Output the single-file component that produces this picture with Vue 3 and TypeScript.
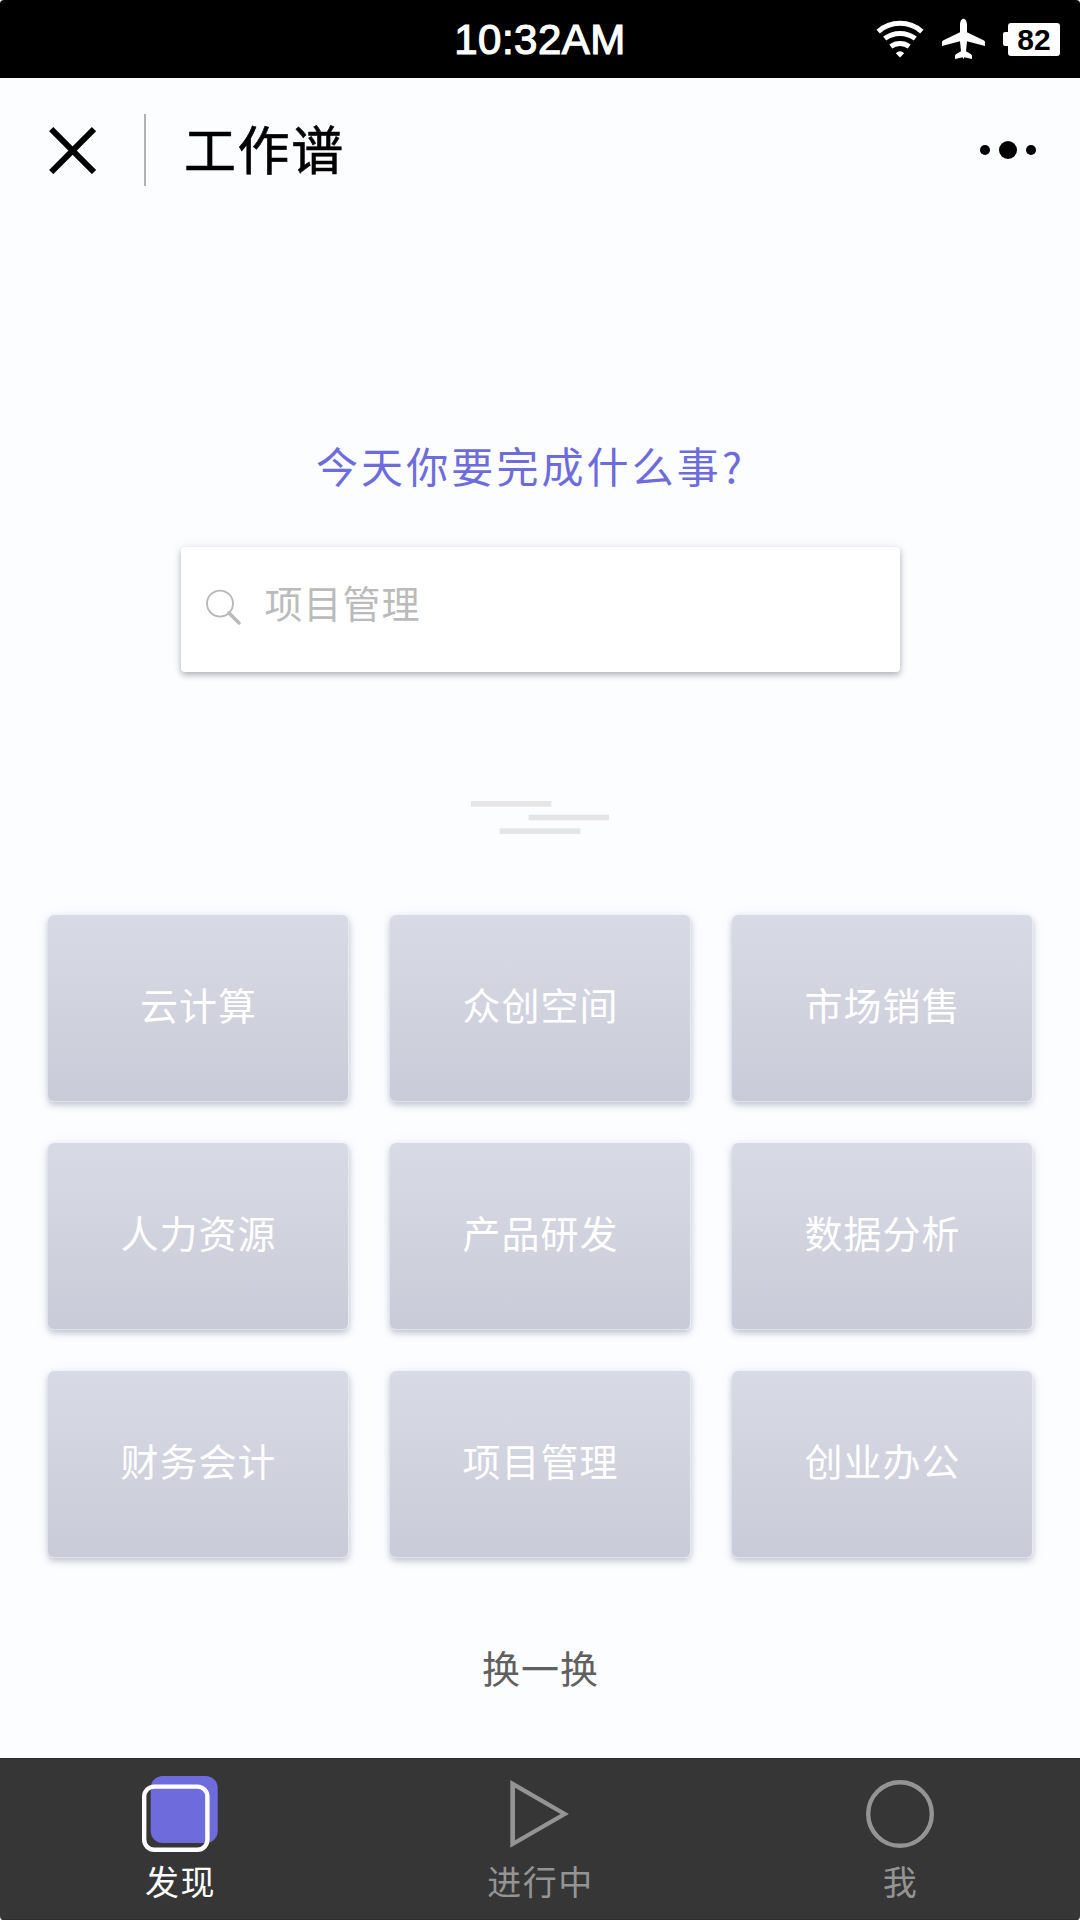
<script setup lang="ts">
import { ref } from 'vue'

interface Tab {
  id: string
  label: string
}

const categories: string[] = [
  '云计算', '众创空间', '市场销售',
  '人力资源', '产品研发', '数据分析',
  '财务会计', '项目管理', '创业办公',
]

const tabs: Tab[] = [
  { id: 'discover', label: '发现' },
  { id: 'progress', label: '进行中' },
  { id: 'me', label: '我' },
]

const active = ref('discover')
</script>

<template>
  <div class="screen">
    <div class="status">
      <span class="side"></span>
      <span class="time">10:32AM</span>
      <div class="side indicators">
        <svg class="wifi" width="48" height="38" viewBox="876 19 48 38" fill="none" stroke="#fff" stroke-width="5">
          <path d="M878.2 30.6A33 33 0 0 1 921.8 30.6" />
          <path d="M884.7 37.6A25.5 25.5 0 0 1 915.3 37.6" />
          <path d="M890.8 45.6A15.6 15.6 0 0 1 909.2 45.6" />
          <path d="M895.8 52.3Q900 48.2 904.2 52.3L900 56.6Z" fill="#fff" stroke="none" />
        </svg>
        <svg class="plane" width="44" height="42" viewBox="942 18 44 42" fill="#fff">
          <path d="M963.5 18.8C965.5 18.8 967 21.5 967 25V32.2L984 40.5Q985 41 985 42.2V46L967 41.3L966 51.2L970.8 54Q972 54.8 972 56V59L964.3 57.2L963.5 59.3L962.7 57.2L955 59V56Q955 54.8 956.2 54L961 51.2L960 41.3L942 46V42.2Q942 41 943 40.5L960 32.2V25C960 21.5 961.5 18.8 963.5 18.8Z" />
        </svg>
        <div class="battery"><i></i><b>82</b></div>
      </div>
    </div>

    <header class="header">
      <svg class="close" width="48" height="48" viewBox="0 0 48 48" stroke="#000" stroke-width="6">
        <path d="M2.2 3.2L45 46M45 3.2L2.2 46" />
      </svg>
      <span class="divider"></span>
      <h1>工作谱</h1>
      <div class="more"><i></i><i class="big"></i><i></i></div>
    </header>

    <main class="content">
      <h2>今天你要完成什么事?</h2>
      <div class="search">
        <svg width="38" height="38" viewBox="0 0 38 38" fill="none" stroke="#b9b9b9">
          <circle cx="15" cy="14.6" r="13" stroke-width="1.9" />
          <path d="M24 24L34 34" stroke-width="3.4" stroke-linecap="round" />
        </svg>
        <span>项目管理</span>
      </div>
      <svg class="lines" width="140" height="36" viewBox="0 0 140 36" fill="#e5e5e5">
        <rect x="1" y="1" width="80.4" height="5.6" />
        <rect x="58.6" y="14.6" width="80.4" height="5.7" />
        <rect x="29.7" y="28.4" width="80.6" height="5.6" />
      </svg>
      <div class="grid">
        <div v-for="name in categories" :key="name" class="card"><span>{{ name }}</span></div>
      </div>
      <div class="refresh">换一换</div>
    </main>

    <nav class="tabs">
      <div v-for="tab in tabs" :key="tab.id" class="tab" :class="{ active: active === tab.id }" @click="active = tab.id">
        <svg width="80" height="80" viewBox="0 0 80 80" fill="none">
          <template v-if="tab.id === 'discover'">
            <rect x="10.7" y="3" width="67" height="67" rx="12" fill="#6e6cdc" />
            <rect x="4.2" y="13.6" width="63.2" height="63.2" rx="10" stroke="#fff" stroke-width="4.4" />
          </template>
          <path v-else-if="tab.id === 'progress'" d="M10.3 7V74.8L68.9 41ZM15 14.8V67.2L60.5 41Z" fill="#949494" fill-rule="evenodd" />
          <circle v-else cx="40" cy="41" r="31.8" stroke="#949494" stroke-width="4.4" />
        </svg>
        <span>{{ tab.label }}</span>
      </div>
    </nav>
  </div>
</template>

<style>
body {
  background: #fff;
}
</style>

<style scoped>
.screen {
  width: 1080px;
  height: 1920px;
  display: flex;
  flex-direction: column;
  overflow: hidden;
  border-radius: 4px;
  background: #fcfdff;
  font-family: "Noto Sans CJK SC", sans-serif;
}
.status {
  height: 78px;
  background: #000;
  color: #fff;
  display: flex;
  align-items: center;
}
.side {
  flex: 1;
  display: flex;
}
.time {
  font: 42px/78px "Liberation Sans", sans-serif;
  -webkit-text-stroke: 1.2px #fff;
  letter-spacing: .5px;
  padding-top: 2px;
}
.indicators {
  justify-content: flex-end;
  align-items: center;
}
.plane {
  margin-left: 18px;
}
.battery {
  margin: 0 20px 0 17px;
  display: flex;
  align-items: center;
}
.battery i {
  width: 5px;
  height: 14px;
  border-radius: 2px 0 0 2px;
  background: #fff;
}
.battery b {
  width: 52px;
  height: 33px;
  border-radius: 3px;
  background: #fff;
  color: #000;
  font: bold 30px/33px "Liberation Sans", sans-serif;
  text-align: center;
}
.header {
  height: 144px;
  display: flex;
  align-items: center;
  padding: 0 44px 0 49px;
}
.divider {
  width: 2px;
  height: 72px;
  margin: 0 38px 0 47px;
  background: #b3b3b5;
}
h1, h2 {
  margin: 0;
  font-weight: 400;
}
h1 {
  font-size: 52px;
  line-height: 72px;
  letter-spacing: 1.6px;
  -webkit-text-stroke: .6px #000;
  flex: 1;
  margin-bottom: 4px;
}
.more {
  display: flex;
  align-items: center;
  gap: 9px;
}
.more i {
  width: 10px;
  height: 10px;
  border-radius: 50%;
  background: #000;
}
.more .big {
  width: 18px;
  height: 18px;
}
.content {
  flex: 1;
  display: flex;
  flex-direction: column;
  align-items: center;
}
h2 {
  margin-top: 213px;
  width: 448px;
  height: 60px;
  line-height: 60px;
  font-size: 42px;
  letter-spacing: 3.1px;
  white-space: nowrap;
  color: #6e6cdc;
}
.search {
  width: 719px;
  height: 125px;
  margin-top: 52px;
  box-sizing: border-box;
  padding-left: 24px;
  display: flex;
  align-items: center;
  border-radius: 4px;
  background: #fff;
  box-shadow: 0 3px 6px rgba(0, 0, 0, .28), 0 0 12px rgba(60, 80, 120, .07);
  color: #bbb;
}
.search svg {
  margin-bottom: 3px;
}
.search span {
  margin: -16px 0 0 22px;
  font-size: 38px;
  letter-spacing: 1px;
}
.lines {
  margin-top: 128px;
}
.grid {
  display: grid;
  grid-template-columns: repeat(3, 301px);
  gap: 41px;
  margin: 79px 0 0 1px;
}
.card {
  height: 187px;
  box-sizing: border-box;
  border-right: 1px solid #e8eaf0;
  border-bottom: 1px solid #dfe2ea;
  border-radius: 6px;
  background: linear-gradient(#d8dae5, #cacbd8);
  box-shadow: 0 3px 6px rgba(60, 70, 95, .28), 0 1px 14px rgba(90, 110, 190, .08);
  display: flex;
  align-items: center;
  justify-content: center;
  color: #fff;
  font-size: 38px;
}
.card span {
  letter-spacing: 1px;
  margin: -10px 0 0 1px;
}
.refresh {
  margin: 81px 0 0 1px;
  line-height: 56px;
  font-size: 38px;
  letter-spacing: 1px;
  color: #606060;
}
.tabs {
  height: 162px;
  box-sizing: border-box;
  border-top: 1px solid #2b2b2b;
  border-bottom: 1px solid #302d2f;
  background: #363636;
  display: flex;
}
.tab {
  flex: 1;
  display: flex;
  flex-direction: column;
  align-items: center;
  padding-top: 14px;
  color: #949494;
}
.tab span {
  margin: 3px 0 0 1px;
  font-size: 34px;
  line-height: 50px;
  letter-spacing: 1.5px;
}
.tab.active {
  color: #fff;
}
</style>
